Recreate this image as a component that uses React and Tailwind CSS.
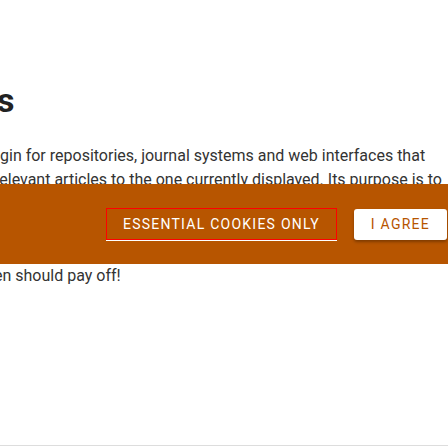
import React from 'react';

const LINES = [
  { text: 'gin for repositories, journal systems and web interfaces that', shift: '' },
  { text: 'relevant articles to the one currently displayed. Its purpose is to', shift: '-ml-[6px]' },
  { text: 'help readers discover related research without leaving the page', shift: '' },
  { text: 'and to keep them exploring the collection for a little longer.', shift: '' },
  { text: 'Setting it up takes only a few minutes and the time invested', shift: '' },
  { text: 'en should pay off!', shift: '-ml-[6px]' },
];

function CookieBanner() {
  return (
    <div className="fixed left-0 right-0 top-[184px] h-[80px] bg-[#b75500] flex items-center justify-end gap-[17px] pr-[1px]">
      <button className="h-[32px] px-[16px] border border-[#ff0000] shadow-[0_1px_0_#ffffff] text-white text-[14px] tracking-[1.25px] uppercase">
        Essential cookies only
      </button>
      <button className="h-[31px] px-[17px] bg-white rounded-[3px] shadow-[0_2px_3px_rgba(0,0,0,0.3)] text-[#b75500] text-[14px] tracking-[1.25px] uppercase">
        I agree
      </button>
    </div>
  );
}

export default function App() {
  return (
    <div className="relative h-[448px] overflow-hidden bg-white flex flex-col font-['Roboto',sans-serif]">
      <div className="pt-[80px]">
        <h2 className="-ml-[3px] text-[34px] leading-[40px] font-bold text-[#222]">s</h2>
        <div className="mt-[24px] text-[16px] leading-[24px] text-[#333]">
          {LINES.map((line, i) => (
            <div key={i} className={`whitespace-nowrap ${line.shift}`}>
              {line.text}
            </div>
          ))}
        </div>
      </div>
      <div className="mt-auto mb-[2px] border-t border-[#dddddd]" />
      <CookieBanner />
    </div>
  );
}
